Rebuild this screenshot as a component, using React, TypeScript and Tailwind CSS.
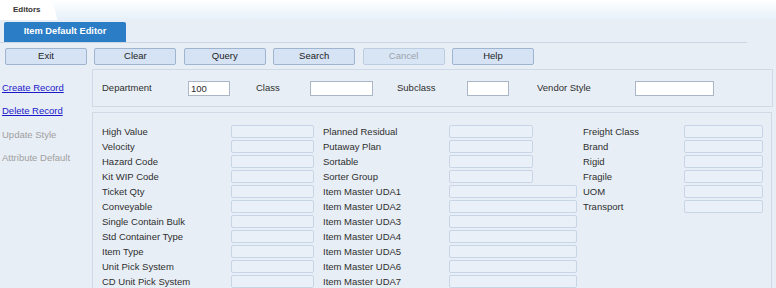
import React from "react";

const col1 = ["High Value","Velocity","Hazard Code","Kit WIP Code","Ticket Qty","Conveyable","Single Contain Bulk","Std Container Type","Item Type","Unit Pick System","CD Unit Pick System"];
const col2 = ["Planned Residual","Putaway Plan","Sortable","Sorter Group","Item Master UDA1","Item Master UDA2","Item Master UDA3","Item Master UDA4","Item Master UDA5","Item Master UDA6","Item Master UDA7"];
const col3 = ["Freight Class","Brand","Rigid","Fragile","UOM","Transport"];

function Field({ label, lw, iw }: { label: string; lw: string; iw: string }) {
  return (
    <div className="flex h-[13px] items-center">
      <div className={`${lw} shrink-0 text-[9.5px] leading-[13px] text-[#2e2e2e] whitespace-nowrap`}>{label}</div>
      <div className={`${iw} h-[13px] shrink-0 rounded-[2px] border border-[#c7d5e7] bg-[#eaf0f8]`} />
    </div>
  );
}

export default function App() {
  const buttons = ["Exit", "Clear", "Query", "Search", "Cancel", "Help"];
  return (
    <div className="w-[776px] h-[288px] overflow-hidden bg-[#e8eef6] text-[#333]" style={{ fontFamily: '"Liberation Sans", Arial, sans-serif' }}>
      {/* top strip */}
      <div className="h-[20px] flex bg-gradient-to-b from-[#ffffff] to-[#e6f0fa]">
        <div className="h-[20px] w-[48px] bg-white flex items-center pl-[13px] text-[8px] font-bold text-[#333]">Editors</div>
        <svg width="10" height="20" viewBox="0 0 10 20" className="block">
          <path d="M0 0 C4 0 5 4 7 10 C8 15 9 20 10 20 L0 20 Z" fill="#ffffff" />
        </svg>
      </div>
      {/* tab row */}
      <div className="h-[23px] w-[747px] border-b border-[#ccd6e4] pl-[4px] pt-[2px]">
        <div className="w-[122px] h-[20px] rounded-t-[2px] bg-[#2b7dc5] flex items-center justify-center text-white font-bold text-[9.3px]">Item Default Editor</div>
      </div>
      {/* buttons */}
      <div className="flex gap-[7.4px] pl-[5px] mt-[5px]">
        {buttons.map((b) => (
          <div key={b} className={`w-[82px] h-[17px] flex items-center justify-center rounded-[2px] border text-[9.5px] ${b === "Cancel" ? "border-[#bccde1] bg-[#d8e5f4] text-[#9aa3ad]" : "border-[#9fb4cf] bg-[#d5e3f4] text-[#222]"}`}>{b}</div>
        ))}
      </div>
      {/* body */}
      <div className="flex mt-[4px]">
        <div className="w-[92px] shrink-0 pt-[7px] pl-[2px] text-[9.5px]">
          <div className="leading-[23.4px] text-[#1a1ac8] underline">Create Record</div>
          <div className="leading-[23.4px] text-[#1a1ac8] underline">Delete Record</div>
          <div className="leading-[23.4px] text-[#a0a0a0]">Update Style</div>
          <div className="leading-[23.4px] text-[#a0a0a0]">Attribute Default</div>
        </div>
        <div className="w-[681px] flex flex-col gap-[5px]">
          <div className="h-[38px] border border-[#d0dae7] flex items-center pl-[9px] pt-[1px] text-[9.5px] text-[#2e2e2e]">
            <div className="w-[86px]">Department</div>
            <div className="w-[42px] h-[15px] bg-white border border-[#aab6c5] text-[9.5px] leading-[13px] pl-[2px]">100</div>
            <div className="w-[54px] ml-[26px]">Class</div>
            <div className="w-[63px] h-[15px] bg-white border border-[#aab6c5]" />
            <div className="w-[70px] ml-[24px]">Subclass</div>
            <div className="w-[42px] h-[15px] bg-white border border-[#aab6c5]" />
            <div className="w-[98px] ml-[28px]">Vendor Style</div>
            <div className="w-[79px] h-[15px] bg-white border border-[#aab6c5]" />
          </div>
          <div className="h-[200px] w-[680px] border border-[#d0dae7] pl-[9px] pt-[12px] flex">
            <div className="w-[221px] flex flex-col gap-[2px]">
              {col1.map((l) => <Field key={l} label={l} lw="w-[129px]" iw="w-[83px]" />)}
            </div>
            <div className="w-[260px] flex flex-col gap-[2px]">
              {col2.map((l, i) => <Field key={l} label={l} lw="w-[126px]" iw={i < 4 ? "w-[84px]" : "w-[128px]"} />)}
            </div>
            <div className="w-[180px] flex flex-col gap-[2px]">
              {col3.map((l) => <Field key={l} label={l} lw="w-[101px]" iw="w-[79px]" />)}
            </div>
          </div>
        </div>
      </div>
    </div>
  );
}
